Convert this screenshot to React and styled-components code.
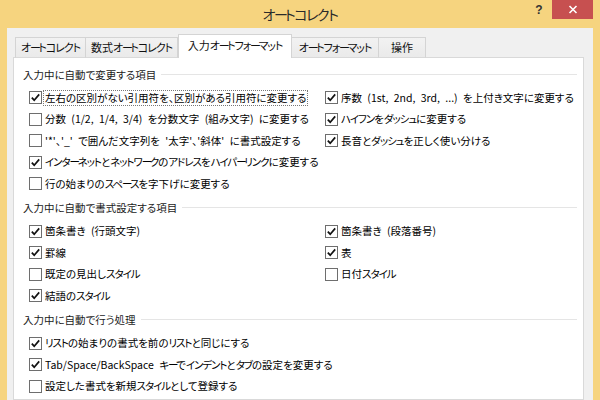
import React from "react";
import styled, { createGlobalStyle } from "styled-components";

const Global = createGlobalStyle`
  html, body { margin: 0; padding: 0; }
  body {
    width: 600px; height: 400px; overflow: hidden;
    background: #F6D47F;
    font-family: "Noto Sans CJK JP", "Noto Sans", sans-serif;
    font-feature-settings: "palt";
    -webkit-font-smoothing: antialiased;
  }
`;

const Window = styled.div`
  width: 600px; height: 400px;
  display: flex; flex-direction: column;
  padding: 0 7px; box-sizing: border-box;
  background: #F6D47F;
`;

const TitleBar = styled.div`
  height: 28px; flex: none;
  display: grid; grid-template-columns: 1fr auto 1fr;
  align-items: start;
`;

const Title = styled.div`
  grid-column: 2;
  line-height: 28px;
  font-size: 14px;
  color: #2A2A2A;
`;

const Controls = styled.div`
  grid-column: 3; justify-self: end;
  display: flex;
`;

const HelpBtn = styled.div`
  width: 26px; height: 19px;
  display: flex; align-items: center; justify-content: center;
  font-family: "Liberation Sans", sans-serif;
  font-weight: bold; font-size: 12px; color: #333;
`;

const CloseBtn = styled.div`
  width: 41px; height: 19px;
  background: #C75050;
  display: flex; align-items: center; justify-content: center;
`;

const Client = styled.div`
  flex: 1; min-height: 0;
  background: #F0F0F0;
  display: flex; flex-direction: column;
  padding: 7px 9px 0 6px;
`;

const TabStrip = styled.div`
  display: flex; align-items: flex-end;
  height: 23px; padding-left: 2px;
  margin-bottom: -1px;
`;

const Tab = styled.div`
  position: relative; z-index: ${p => (p.$active ? 2 : 1)};
  box-sizing: border-box;
  width: ${p => p.$w}px;
  height: ${p => (p.$active ? 24 : 21)}px;
  margin-left: ${p => p.$ml || 0}px;
  border: 1px solid #D4D4D4;
  border-bottom: ${p => (p.$active ? "none" : "1px solid #D9D9D9")};
  background: ${p => (p.$active ? "#FFFFFF" : "linear-gradient(#F2F2F2, #EAEAEA)")};
  font-size: 11px; color: #111;
  display: flex; justify-content: center;
  padding-top: ${p => (p.$active ? 3 : 2)}px;
  line-height: 14px;
  white-space: nowrap;
`;

const Panel = styled.div`
  flex: 1; min-height: 0;
  background: #FFFFFF;
  border: 1px solid #D9D9D9;
  padding: 8px 6px 0 9px;
  display: flex; flex-direction: column; gap: 5px;
`;

const Section = styled.div`
  display: flex; flex-direction: column; gap: 5px;
`;

const Header = styled.div`
  height: 16px;
  display: flex; align-items: center; gap: 5px;
  font-size: 10.5px; color: #1A1A1A;
  white-space: nowrap;
  &::after {
    content: ""; flex: 1; height: 1px; background: #E5E5E5;
  }
`;

const Grid = styled.div`
  display: grid;
  grid-template-columns: 296px 1fr;
  grid-auto-rows: 21.5px;
  padding-left: 6px;
`;

const Row = styled.div`
  grid-column: ${p => (p.$wide ? "1 / -1" : "auto")};
  display: flex; align-items: center; gap: 1px;
  white-space: nowrap;
  font-size: 10.5px; color: #000;
  word-spacing: 3px;
`;

const Box = styled.span`
  width: 13px; height: 13px; box-sizing: border-box; flex: none;
  border: 1px solid #6E6E6E; background: #FFF;
  display: flex; align-items: center; justify-content: center;
`;

const Label = styled.span`
  line-height: 14px;
  padding: 0 1px;
  border: 1px ${p => (p.$focus ? "dotted #777" : "solid transparent")};
`;

const Kana = styled.span`
  letter-spacing: -0.1em;
`;

const Long = styled.span`
  letter-spacing: -0.22em;
`;

const JP = ({ children }) => {
  const parts = String(children).split(/([\u30A1-\u30FA\u30FC]+)/);
  return parts.map((part, i) => {
    if (i % 2 === 0) return part;
    const sub = part.split(/(\u30FC+)/);
    return (
      <Kana key={i}>
        {sub.map((s, j) => (j % 2 === 1 ? <Long key={j}>{s}</Long> : s))}
      </Kana>
    );
  });
};

const Check = ({ on }) => (
  <Box>
    {on && (
      <svg width="11" height="11" viewBox="0 0 11 11">
        <path d="M1.8 5.6 L4.2 8.2 L9.2 2.4" fill="none" stroke="#111" strokeWidth="1.7" />
      </svg>
    )}
  </Box>
);

const Item = ({ on, text, wide, focus }) => (
  <Row $wide={wide}>
    <Check on={on} />
    <Label $focus={focus}><JP>{text}</JP></Label>
  </Row>
);

const Filler = styled.div``;

export default function App() {
  return (
    <>
      <Global />
      <Window>
        <TitleBar>
          <Title><JP>オートコレクト</JP></Title>
          <Controls>
            <HelpBtn>?</HelpBtn>
            <CloseBtn>
              <svg width="10" height="9" viewBox="0 0 10 9">
                <path d="M1.5 1 L8.5 8 M8.5 1 L1.5 8" stroke="#FFF" strokeWidth="1.6" />
              </svg>
            </CloseBtn>
          </Controls>
        </TitleBar>
        <Client>
          <TabStrip>
            <Tab $w={71}><JP>オートコレクト</JP></Tab>
            <Tab $w={93} $ml={-1}><JP>数式オートコレクト</JP></Tab>
            <Tab $w={114} $active><JP>入力オートフォーマット</JP></Tab>
            <Tab $w={88} $ml={-1}><JP>オートフォーマット</JP></Tab>
            <Tab $w={48} $ml={-1}>操作</Tab>
          </TabStrip>
          <Panel>
            <Section>
              <Header>入力中に自動で変更する項目</Header>
              <Grid>
                <Item on focus text="左右の区別がない引用符を、区別がある引用符に変更する" />
                <Item on text="序数 (1st, 2nd, 3rd, ...) を上付き文字に変更する" />
                <Item text="分数 (1/2, 1/4, 3/4) を分数文字 (組み文字) に変更する" />
                <Item on text="ハイフンをダッシュに変更する" />
                <Item text="'*'、'_' で囲んだ文字列を '太字'、'斜体' に書式設定する" />
                <Item on text="長音とダッシュを正しく使い分ける" />
                <Item on wide text="インターネットとネットワークのアドレスをハイパーリンクに変更する" />
                <Item wide text="行の始まりのスペースを字下げに変更する" />
              </Grid>
            </Section>
            <Section>
              <Header>入力中に自動で書式設定する項目</Header>
              <Grid>
                <Item on text="箇条書き (行頭文字)" />
                <Item on text="箇条書き (段落番号)" />
                <Item on text="罫線" />
                <Item on text="表" />
                <Item text="既定の見出しスタイル" />
                <Item text="日付スタイル" />
                <Item on text="結語のスタイル" />
                <Filler />
              </Grid>
            </Section>
            <Section>
              <Header>入力中に自動で行う処理</Header>
              <Grid>
                <Item on wide text="リストの始まりの書式を前のリストと同じにする" />
                <Item on wide text="Tab/Space/BackSpace キーでインデントとタブの設定を変更する" />
                <Item wide text="設定した書式を新規スタイルとして登録する" />
              </Grid>
            </Section>
          </Panel>
        </Client>
      </Window>
    </>
  );
}
